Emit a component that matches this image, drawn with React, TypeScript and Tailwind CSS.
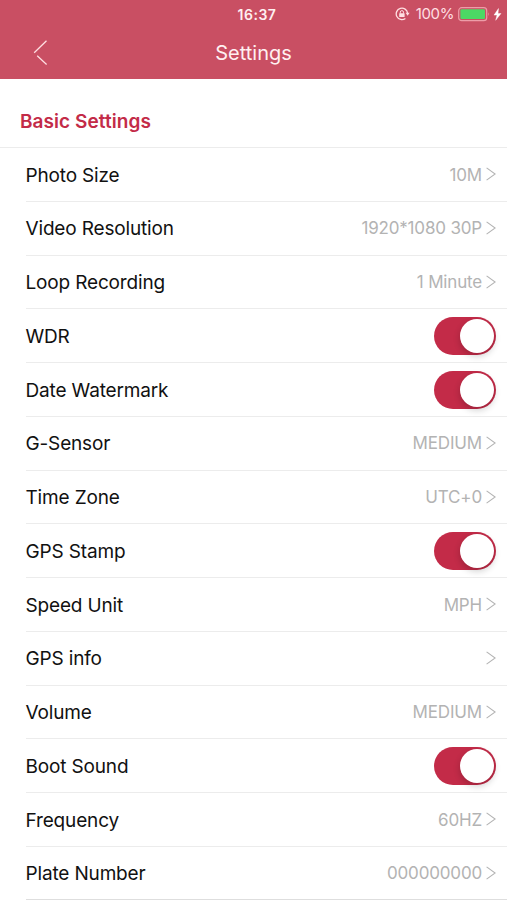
import React from 'react';

type Setting = {
    label: string;
    value?: string;
    toggle?: boolean;
};

const settings: Setting[] = [
    { label: 'Photo Size', value: '10M' },
    { label: 'Video Resolution', value: '1920*1080 30P' },
    { label: 'Loop Recording', value: '1 Minute' },
    { label: 'WDR', toggle: true },
    { label: 'Date Watermark', toggle: true },
    { label: 'G-Sensor', value: 'MEDIUM' },
    { label: 'Time Zone', value: 'UTC+0' },
    { label: 'GPS Stamp', toggle: true },
    { label: 'Speed Unit', value: 'MPH' },
    { label: 'GPS info', value: '' },
    { label: 'Volume', value: 'MEDIUM' },
    { label: 'Boot Sound', toggle: true },
    { label: 'Frequency', value: '60HZ' },
    { label: 'Plate Number', value: '000000000' },
];

const StatusBar: React.FC = () => (
    <div className="relative flex h-7 items-center justify-center text-white">
        <span className="pl-[7px] text-[14px] font-semibold tracking-[0.5px] text-[#fff0f1]">16:37</span>
        <div className="absolute right-[5px] top-0 flex h-7 items-center">
            {/* Orientation lock */}
            <svg width="15" height="14" viewBox="0 0 15 14" fill="none" className="mr-1.5 text-[#ffdfe2]">
                <path
                    d="M12.6 6.3A5.7 5.7 0 1 0 10.4 11.4"
                    stroke="currentColor"
                    strokeWidth="1.3"
                />
                <path d="M10.6 5.8h4l-2 3z" fill="currentColor" />
                <rect x="4.2" y="6.3" width="5.4" height="3.7" rx=".5" fill="currentColor" />
                <path d="M5.3 6.5V5.2a1.6 1.6 0 0 1 3.2 0v1.3" stroke="currentColor" />
            </svg>
            <span className="text-[15px] tracking-[-0.4px] text-[#ffdfe2]">100%</span>
            {/* Battery */}
            <svg width="33" height="15" viewBox="0 0 33 15" fill="none" className="ml-1">
                <rect x=".7" y=".7" width="28" height="13" rx="3" stroke="#ed9da8" strokeWidth="1.2" />
                <rect x="2.4" y="2.3" width="24.6" height="9.8" rx="1.3" fill="#4cd964" />
                <path d="M30.3 5.2q1.6 2 0 4z" fill="#ed9da8" />
            </svg>
            <svg width="9" height="13" viewBox="0 0 9 13" className="ml-0.5">
                <path d="M5.5.5 1 7.1h3L2.7 12.3 8 5.5H5z" fill="#fff" stroke="#fff" strokeWidth=".4" />
            </svg>
        </div>
    </div>
);

const Toggle: React.FC = () => (
    <button
        type="button"
        role="switch"
        aria-checked="true"
        className="mt-px flex h-[38px] w-[62.5px] items-center justify-end rounded-full bg-[#c32b48] pr-[2px]"
    >
        <span className="size-[34px] rounded-full bg-white shadow-[0_3px_7px_rgba(0,0,0,0.2)]" />
    </button>
);

const Chevron: React.FC = () => (
    <svg width="10" height="14" viewBox="0 0 10 14" fill="none">
        <path d="M.6.9 9.2 7 .6 13.1" stroke="#b3b3b3" strokeWidth="1.1" />
    </svg>
);

const SettingRow: React.FC<{ setting: Setting }> = ({ setting }) => (
    <li className="ml-[26px] flex h-[53.75px] items-center justify-between border-b border-[#ececec] pr-[11px] last:h-[53px] last:border-[#dedede]">
        <span className="-ml-[0.5px] pt-[3px] text-[19px] tracking-[-0.16px] text-[#111]">{setting.label}</span>
        {setting.toggle ? (
            <Toggle />
        ) : (
            <div className="flex items-center gap-1">
                <span className="pt-0.5 text-[17px] tracking-[-0.17px] text-[#b3b3b3]">{setting.value}</span>
                <Chevron />
            </div>
        )}
    </li>
);

const App: React.FC = () => {
    return (
        <div className="h-[900px] w-[507px] overflow-hidden bg-white font-['Inter',sans-serif] [font-feature-settings:'calt'_0]">
            <header className="h-[79px] bg-[#c94f63]">
                <StatusBar />
                <div className="relative flex h-[49px] items-center justify-center">
                    <svg
                        width="15"
                        height="26"
                        viewBox="0 0 15 26"
                        fill="none"
                        className="absolute left-[33px] top-3"
                    >
                        <path d="M13.5.8 1.2 12.8M4.2 15.8l9.4 8.7" stroke="#ffdfe2" strokeWidth="1.3" />
                    </svg>
                    <h1 className="text-[20px] text-[#fff0f1]">Settings</h1>
                </div>
            </header>

            <h2 className="flex h-[69px] items-center border-b border-[#ececec] pl-5 pt-[18px] text-[19px] font-semibold tracking-[0.07px] text-[#c32b48]">
                Basic Settings
            </h2>

            <ul>
                {settings.map((setting) => (
                    <SettingRow key={setting.label} setting={setting} />
                ))}
            </ul>
        </div>
    );
};

export default App;
